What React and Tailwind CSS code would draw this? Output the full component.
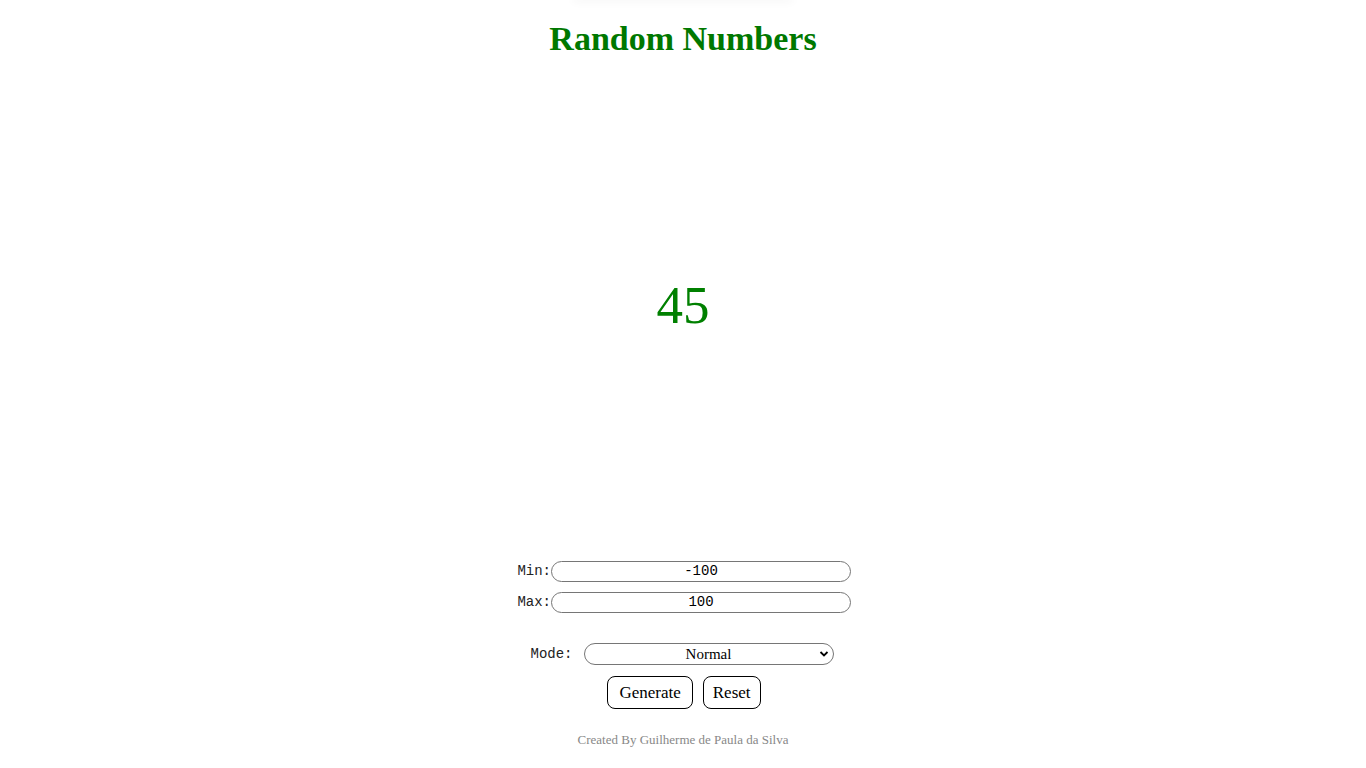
import React from "react";

function Field({ label, value }) {
  return (
    <div className="flex items-center">
      <label className="w-[36px] text-right text-[14px] text-[#222] font-['Liberation_Mono',monospace]">{label}</label>
      <input
        readOnly
        value={value}
        className="w-[300px] h-[21px] rounded-full border border-[#767676] text-center text-[14px] text-black outline-none font-['Liberation_Mono',monospace]"
      />
    </div>
  );
}

export default function App() {
  return (
    <div className="flex flex-col items-center w-full min-h-[768px] bg-white font-['Liberation_Serif',serif]">
      <div className="w-[220px] h-[2px] -mt-[2px] shadow-[0_0_10px_rgba(0,0,0,0.12)]" />
      <h1 className="mt-[19px] text-[34px] leading-[40px] font-bold text-[#007800]">Random Numbers</h1>
      <div className="h-[492px] flex items-center justify-center">
        <span className="text-[53px] leading-none text-[#008000]">45</span>
      </div>
      <div className="flex flex-col items-center gap-[10px] mt-[10px]">
        <Field label="Min:" value="-100" />
        <Field label="Max:" value="100" />
      </div>
      <div className="flex items-center mt-[30px] -ml-[2px]">
        <label className="w-[53px] text-[14px] text-[#222] font-['Liberation_Mono',monospace]">Mode:</label>
        <div className="relative w-[250px] h-[22px] rounded-full border border-[#767676] flex items-center justify-center">
          <span className="text-[15px] text-black">Normal</span>
          <svg className="absolute right-[4px] top-[5px]" width="10" height="10" viewBox="0 0 10 10">
            <path d="M1.5 3 L5 6.5 L8.5 3" fill="none" stroke="black" strokeWidth="1.8" />
          </svg>
        </div>
      </div>
      <div className="flex gap-[10px] mt-[11px] ml-[2px]">
        <button className="h-[33px] px-[11px] rounded-[8px] border border-black text-[17px] text-black bg-white">Generate</button>
        <button className="h-[33px] px-[9px] rounded-[8px] border border-black text-[17px] text-black bg-white">Reset</button>
      </div>
      <p className="mt-[21px] text-[13px] text-[#888]">Created By Guilherme de Paula da Silva</p>
    </div>
  );
}
